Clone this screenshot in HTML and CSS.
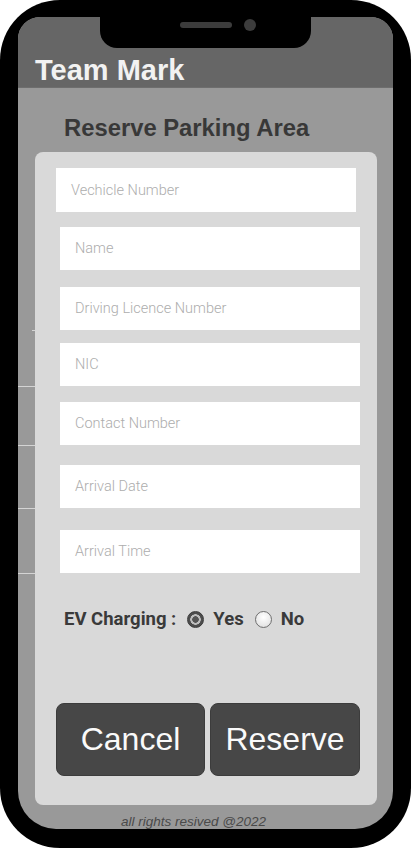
FILE: index.html
```html
<!DOCTYPE html>
<html>
<head>
<meta charset="utf-8">
<link rel="stylesheet" href="styles.css">
</head>
<body>
<div class="phone">
  <div class="notch"><span class="speaker"></span><span class="camera"></span></div>
  <div class="screen">
    <header class="appbar"><h1 class="brand">Team Mark</h1></header>
    <h2 class="page-title">Reserve Parking Area</h2>
    <form class="card">
      <div class="field field-first"><span class="ph">Vechicle Number</span></div>
      <div class="field"><span class="ph">Name</span></div>
      <div class="field tick-short"><span class="ph">Driving Licence Number</span></div>
      <div class="field tick"><span class="ph">NIC</span></div>
      <div class="field tick"><span class="ph">Contact Number</span></div>
      <div class="field tick"><span class="ph">Arrival Date</span></div>
      <div class="field tick"><span class="ph">Arrival Time</span></div>
      <div class="ev-row">
        <span class="ev-label">EV Charging :</span>
        <span class="radio radio-on"></span><span class="opt">Yes</span>
        <span class="radio radio-off"></span><span class="opt">No</span>
      </div>
      <div class="actions">
        <button type="button" class="btn">Cancel</button>
        <button type="button" class="btn">Reserve</button>
      </div>
    </form>
    <footer class="foot">all rights resived @2022</footer>
  </div>
</div>
</body>
</html>
```
FILE: styles.css
```css
html, body {
  margin: 0;
  padding: 0;
  background: #ffffff;
}
.phone {
  position: relative;
  width: 411px;
  height: 848px;
  box-sizing: border-box;
  padding: 17px 18px 19px 18px;
  background: #000;
  border-radius: 60px;
}
.notch {
  position: absolute;
  left: 100px;
  top: 0;
  width: 211px;
  height: 48px;
  background: #000;
  border-radius: 0 0 17px 17px;
  z-index: 2;
}
.speaker {
  position: absolute;
  left: 80px;
  top: 22px;
  width: 52px;
  height: 6px;
  border-radius: 3px;
  background: #3c3c3c;
}
.camera {
  position: absolute;
  left: 144px;
  top: 19px;
  width: 12px;
  height: 12px;
  border-radius: 50%;
  background: #3c3c3c;
}
.screen {
  height: 100%;
  background: #999999;
  border-radius: 22px 22px 38px 38px;
  overflow: hidden;
  display: flex;
  flex-direction: column;
}
.appbar {
  height: 71px;
  box-sizing: border-box;
  background: #666666;
  padding: 37px 0 0 17px;
  border-bottom: 1px solid #6e6e6e;
}
.brand {
  margin: 0;
  font-family: "Liberation Sans", Arial, sans-serif;
  font-weight: bold;
  font-size: 29px;
  line-height: 32px;
  color: #f2f2f2;
}
.page-title {
  margin: 26px 0 10px 46px;
  font-family: "Liberation Sans", Arial, sans-serif;
  font-weight: bold;
  font-size: 23.8px;
  line-height: 28px;
  color: #383838;
}
.card {
  margin: 0 16px 0 17px;
  background: #d9d9d9;
  border-radius: 8px;
  padding: 16px 0 29px 25px;
  display: flex;
  flex-direction: column;
}
.field {
  position: relative;
  width: 300px;
  height: 43px;
  background: #ffffff;
  display: flex;
  align-items: center;
  padding-left: 15px;
  box-sizing: border-box;
}
.field-first { margin-left: -4px; height: 44px; }
.field:nth-child(2) { margin-top: 15px; }
.field:nth-child(3) { margin-top: 17px; }
.field:nth-child(4) { margin-top: 13px; }
.field:nth-child(5) { margin-top: 16px; }
.field:nth-child(6) { margin-top: 20px; }
.field:nth-child(7) { margin-top: 22px; }
.tick::after {
  content: "";
  position: absolute;
  left: -42px;
  bottom: -1px;
  width: 17px;
  height: 1px;
  background: #d4d4d4;
}
.tick-short::after {
  content: "";
  position: absolute;
  left: -28px;
  bottom: -1px;
  width: 3px;
  height: 1px;
  background: #d4d4d4;
}
.ph {
  font-family: Roboto, "Noto Sans", sans-serif;
  font-weight: 300;
  font-size: 14.5px;
  color: #adadad;
}
.ev-row {
  margin-top: 34px;
  margin-left: 4px;
  height: 24px;
  display: flex;
  align-items: center;
  font-family: Roboto, "Noto Sans", sans-serif;
  font-weight: bold;
  font-size: 18.5px;
  color: #3a3a3a;
}
.ev-label { margin-right: 11px; }
.opt { margin-left: 9px; margin-right: 11px; }
.radio {
  width: 17px;
  height: 17px;
  border-radius: 50%;
  box-sizing: border-box;
}
.radio-on {
  background: radial-gradient(circle, #555 0 3px, #bdbdbd 3.5px 5px, #4d4d4d 5.5px);
  border: 1px solid #3a3a3a;
}
.radio-off {
  background: radial-gradient(circle at 50% 35%, #ffffff 0, #e6e6e6 70%, #cfcfcf 100%);
  border: 1px solid #6f6f6f;
}
.actions {
  margin-top: 72px;
  margin-left: -4px;
  display: flex;
  gap: 5px;
}
.btn {
  width: 149px;
  height: 73px;
  border: 1px solid #3c3c3c;
  border-radius: 8px;
  background: #474747;
  color: #fafafa;
  font-family: "Liberation Sans", Arial, sans-serif;
  font-size: 32px;
  padding: 0;
}
.btn + .btn { width: 150px; }
.foot {
  padding: 9px 0 0 103px;
  font-family: "Liberation Sans", Arial, sans-serif;
  font-style: italic;
  font-size: 13.5px;
  color: #4a4a4a;
}
```
